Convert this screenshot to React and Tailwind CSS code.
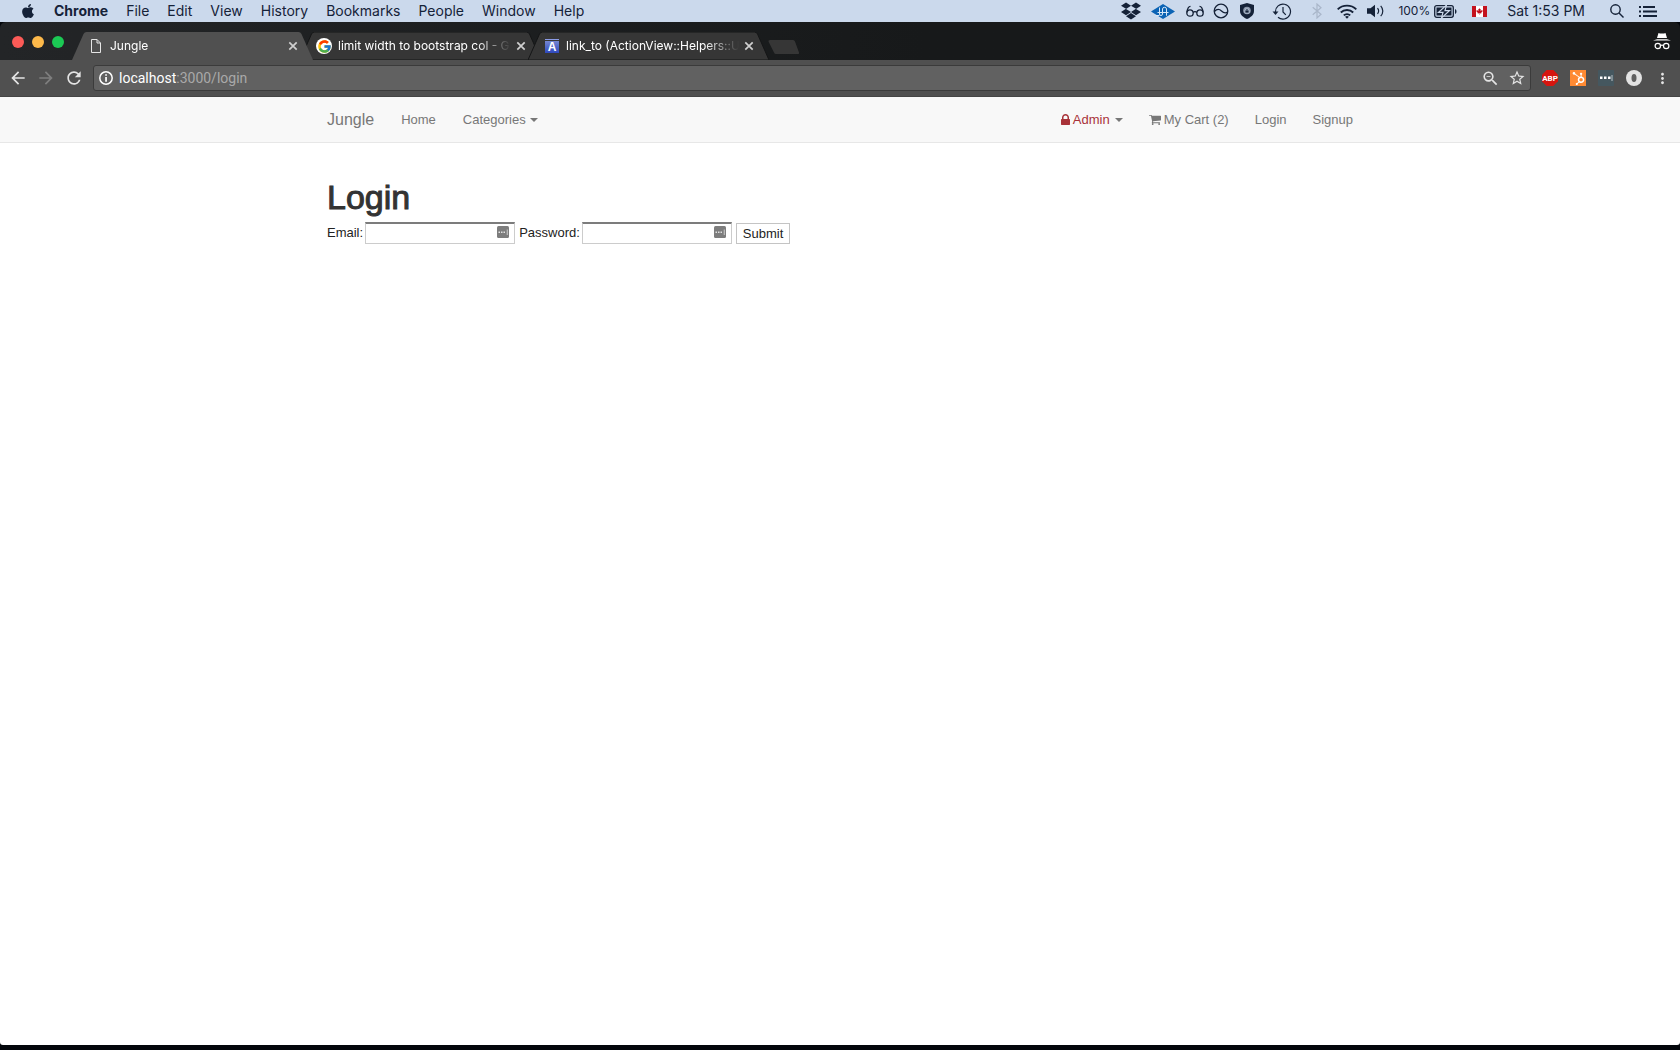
import React from "react";
import { FaApple, FaDropbox, FaHubspot, FaCanadianMapleLeaf } from "react-icons/fa";
import { FcGoogle } from "react-icons/fc";
import { MdArrowBack, MdArrowForward, MdRefresh, MdStarBorder, MdMoreVert, MdZoomOut } from "react-icons/md";

const menuItems = ["File", "Edit", "View", "History", "Bookmarks", "People", "Window", "Help"];

function GlassesIcon() {
  return (
    <svg width="18" height="12" viewBox="0 0 18 12" fill="none" stroke="currentColor" strokeWidth="1.3">
      <circle cx="4" cy="8" r="3.2" />
      <circle cx="14" cy="8" r="3.2" />
      <path d="M7.2 7.6c.8-1.4 2.8-1.4 3.6 0M1 7.4C1.300 4 2 1.300 4.500 1.300M17 7.400C16.700 4 16 1.300 13.500 1.300" />
    </svg>
  );
}

function DiamondIcon() {
  return (
    <svg width="24" height="15" viewBox="0 0 24 15">
      <path d="M12 0L24 7.500L12 15L0 7.500Z" fill="#0b63b4" />
      <path d="M8.500 3.500v6.500q0 1.500 1.500 1.500t1.500-1.500V5q0-1.700 2-1.700t2 1.700v6.700M4.500 11.500h4M6.500 8.500h11" fill="none" stroke="#d5e6f7" strokeWidth="1" />
    </svg>
  );
}

function CircleWaveIcon() {
  return (
    <svg width="16" height="16" viewBox="0 0 16 16" fill="none" stroke="currentColor" strokeWidth="1.300">
      <circle cx="8" cy="8" r="6.800" />
      <path d="M1.400 8.500C4 5.500 6.500 6 8.500 8s4 2.600 6.100 1" />
    </svg>
  );
}

function ShieldIcon() {
  return (
    <svg width="14" height="16" viewBox="0 0 14 16">
      <path d="M7 0l7 2v6c0 4-3.500 6.500-7 8-3.500-1.500-7-4-7-8V2z" fill="currentColor" />
      <circle cx="7" cy="7.500" r="3.800" fill="#8b97aa" />
      <path d="M5 7h4v3H5zM5.700 7V5.500h2.600V7" fill="#152238" stroke="#cfdcee" strokeWidth=".6" />
    </svg>
  );
}

function TimeMachineIcon() {
  return (
    <svg width="20" height="17" viewBox="0 0 20 17" fill="none" stroke="currentColor" strokeWidth="1.200">
      <path d="M3.500 9A7.500 7.500 0 1 1 6 14.200" />
      <path d="M11 4v5l2.800 2.800" />
      <path d="M.5 8.500h6L3.500 12z" fill="currentColor" stroke="none" />
    </svg>
  );
}

function BluetoothIcon() {
  return (
    <svg width="10" height="16" viewBox="0 0 10 16" fill="none" stroke="#a9b6c9" strokeWidth="1.200">
      <path d="M.7 4.300l8.300 7L5 15V1l4 3.700-8.300 7" />
    </svg>
  );
}

function WifiIcon() {
  return (
    <svg width="20" height="15" viewBox="0 0 20 15" fill="none" stroke="currentColor" strokeWidth="1.900">
      <path d="M.7 5.400c5-5 13.600-5 18.600 0M3.800 8.500c3.400-3.300 9-3.300 12.400 0M6.800 11.400c1.800-1.700 4.600-1.700 6.400 0" />
      <path d="M10 14.800l-1.900-2c1-1 2.800-1 3.800 0z" fill="currentColor" stroke="none" />
    </svg>
  );
}

function VolumeIcon() {
  return (
    <svg width="17" height="14" viewBox="0 0 17 14" fill="none" stroke="currentColor" strokeWidth="1.200">
      <path d="M0 4.300h3.500L8 .8v12.400L3.500 9.700H0z" fill="currentColor" stroke="none" />
      <path d="M10.500 4.200c1.300 1.600 1.300 4 0 5.600M13.700 1.800c2.800 3 2.800 7.400 0 10.400" />
    </svg>
  );
}

function BatteryIcon() {
  return (
    <svg width="23" height="13" viewBox="0 0 23 13">
      <rect x=".7" y=".7" width="18.600" height="11.600" rx="2" fill="none" stroke="currentColor" strokeWidth="1.300" />
      <rect x="2.500" y="2.500" width="15" height="8" fill="currentColor" />
      <path d="M12.500 0L4.500 7.300h4.500L7.500 13l8-7.300H11z" fill="currentColor" stroke="#ccd9ec" strokeWidth="1.200" />
      <path d="M21 4c2 .8 2 4.200 0 5z" fill="currentColor" />
    </svg>
  );
}

function FlagIcon() {
  return (
    <span className="flex h-[11px] w-[15px] items-center justify-center border-x-4 border-[#c4131f] bg-white text-[#c4131f]">
      <FaCanadianMapleLeaf size={7} className="shrink-0" />
    </span>
  );
}

function SearchIcon() {
  return (
    <svg width="14" height="14" viewBox="0 0 14 14" fill="none" stroke="currentColor" strokeWidth="1.400">
      <circle cx="5.500" cy="5.500" r="4.700" />
      <path d="M9 9l4.500 4.500" />
    </svg>
  );
}

function ListIcon() {
  return (
    <svg width="18" height="11" viewBox="0 0 18 11" fill="currentColor">
      <path d="M0 0h2v2H0zM4 0h12v2H4zM0 4.500h2v2H0zM4 4.500h14v2H4zM0 9h2v2H0zM4 9h14v2H4z" />
    </svg>
  );
}

function MenuBar() {
  return (
    <header className="flex h-[22px] items-center justify-between bg-[#cbd9ec] pr-[23px] pl-5 font-[Inter,sans-serif] text-sm text-[#152238]">
      <nav className="flex items-center gap-[18px]" aria-label="Application menu">
        <FaApple size={16} />
        <span className="font-bold">Chrome</span>
        {menuItems.map((m) => (
          <span key={m}>{m}</span>
        ))}
      </nav>
      <div className="flex items-center">
        <FaDropbox size={20} />
        <span className="ml-2.5"><DiamondIcon /></span>
        <span className="ml-[11px]"><GlassesIcon /></span>
        <span className="ml-[9px]"><CircleWaveIcon /></span>
        <span className="ml-[11px]"><ShieldIcon /></span>
        <span className="ml-[18px]"><TimeMachineIcon /></span>
        <span className="ml-5"><BluetoothIcon /></span>
        <span className="ml-[15px]"><WifiIcon /></span>
        <span className="ml-2.5"><VolumeIcon /></span>
        <span className="ml-3.5 text-xs">100%</span>
        <span className="ml-1"><BatteryIcon /></span>
        <span className="ml-[15px]"><FlagIcon /></span>
        <span className="ml-5">Sat 1:53 PM</span>
        <span className="ml-[25px]"><SearchIcon /></span>
        <span className="ml-[15px]"><ListIcon /></span>
      </div>
    </header>
  );
}

function PageIcon() {
  return (
    <svg width="10" height="14" viewBox="0 0 10 14" fill="none" stroke="#e6e6e6" strokeWidth="1">
      <path d="M.5.5H6L9.500 4v9.500h-9zM6 .5V4h3.500" />
    </svg>
  );
}

function GoogleIcon() {
  return (
    <span className="flex size-4 items-center justify-center rounded-full bg-white">
      <FcGoogle size={15} />
    </span>
  );
}

function LetterIcon() {
  return (
    <span className="flex flex-col gap-px">
      <span className="h-px w-3.5 bg-[#8b9be6]" />
      <span className="flex h-3 w-3.5 items-center justify-center bg-linear-to-b from-[#7586d2] to-[#2f48bd] font-[Liberation_Sans,sans-serif] text-xs font-bold text-white">
        A
      </span>
    </span>
  );
}

function Tab({ icon, title, active }) {
  return (
    <div className={active ? "relative z-10 -mr-[13px] h-7 w-[241px]" : "relative -mr-[13px] h-7 w-[241px]"}>
      <svg className="absolute inset-0" width="241" height="28" viewBox="0 0 241 28">
        <path
          d="M0 28L11.500 2Q12.500 0 14.500 0H226.500Q228.500 0 229.500 2L241 28Z"
          fill={active ? "#505050" : "#363636"}
          stroke="#151617"
          strokeWidth={active ? "0" : "1"}
        />
      </svg>
      <div className="relative flex h-full items-center pl-4">
        <span className="flex w-[22px] shrink-0 items-center">
          <span className="flex w-4 justify-center">{icon}</span>
        </span>
        <span className="w-[173px] font-[Inter,sans-serif] text-xs whitespace-nowrap text-white mask-r-from-80% mask-r-to-100%">
          {title}
        </span>
        <button type="button" aria-label="Close tab" className="ml-[5px] text-[#d0d0d0]">
          <svg width="10" height="10" viewBox="0 0 10 10" stroke="currentColor" strokeWidth="1.700">
            <path d="M1.300 1.300l7.400 7.400M8.700 1.300L1.300 8.700" />
          </svg>
        </button>
      </div>
    </div>
  );
}

function IncognitoIcon() {
  return (
    <svg width="18" height="17" viewBox="0 0 18 17">
      <path d="M5.500 0l1.500.5h4L12.500 0 14 5H4zM0 7.500l4-1.200h10l4 1.200z" fill="#fff" />
      <g fill="none" stroke="#fff" strokeWidth="1.200">
        <circle cx="4.800" cy="13" r="2.700" />
        <circle cx="13.200" cy="13" r="2.700" />
        <path d="M7.500 12.500q1.500-.8 3 0" />
      </g>
    </svg>
  );
}

function TabStrip() {
  return (
    <div className="flex h-[38px] items-end justify-between rounded-t-md bg-linear-to-r from-[#232527] via-[#17191a] via-55% to-[#17191a] pl-3">
      <div className="flex items-end">
        <div className="mr-3 mb-3 flex gap-2">
          <button type="button" aria-label="Close window" className="size-3 rounded-full bg-[#fc5b57]" />
          <button type="button" aria-label="Minimise window" className="size-3 rounded-full bg-[#fdb94a]" />
          <button type="button" aria-label="Zoom window" className="mr-[-4px] size-3 rounded-full bg-[#1bc954]" />
        </div>
        <Tab active icon={<PageIcon />} title="Jungle" />
        <Tab icon={<GoogleIcon />} title="limit width to bootstrap col - G" />
        <Tab icon={<LetterIcon />} title="link_to (ActionView::Helpers::U" />
        <button type="button" aria-label="New tab" className="mb-1.5 ml-3">
          <svg width="32" height="14" viewBox="0 0 32 14">
            <path d="M2 0H25Q26.500 0 27 1.500L31 12.500Q31.500 14 30 14H8Q6.500 14 6 12.500L.5 1.500Q0 0 2 0Z" fill="#363636" />
          </svg>
        </button>
      </div>
      <div className="self-center pr-[9px]">
        <IncognitoIcon />
      </div>
    </div>
  );
}

function InfoIcon() {
  return (
    <svg width="14" height="14" viewBox="0 0 14 14" className="mr-1.5 ml-px">
      <circle cx="7" cy="7" r="6.200" fill="none" stroke="#fff" strokeWidth="1.500" />
      <path d="M6.200 3.200h1.700v1.600H6.200zM6.200 6h1.700v4.800H6.200z" fill="#fff" />
    </svg>
  );
}

function DotsBox() {
  return (
    <svg width="16" height="16" viewBox="0 0 16 16">
      <rect width="16" height="16" rx="1" fill="#45575f" />
      <path d="M2 6.500h2.500V9H2zM6 6.500h2.500V9H6zM10 6.500h2.500V9H10z" fill="#fff" />
      <path d="M13.500 5h1v6h-1z" fill="#b9c2c6" />
    </svg>
  );
}

function Toolbar() {
  return (
    <div className="flex h-[37px] items-center border-b border-[#454545] bg-[#505050] pr-[9px] pl-2 text-[#e4e4e4]">
      <button type="button" aria-label="Back" className="mr-2"><MdArrowBack size={20} /></button>
      <button type="button" aria-label="Forward" className="mr-2 text-[#7e7e7e]"><MdArrowForward size={20} /></button>
      <button type="button" aria-label="Reload" className="mr-[9px]"><MdRefresh size={20} /></button>
      <div className="flex h-[26px] flex-1 items-center rounded-[3px] border border-[#3b3b3b] bg-[#616161] px-1">
        <InfoIcon />
        <div className="flex-1 font-[Roboto,sans-serif] text-sm text-white">
          localhost<span className="text-[#a9a9a9]">:3000/login</span>
        </div>
        <button type="button" aria-label="Zoom" className="mr-2"><MdZoomOut size={19} /></button>
        <button type="button" aria-label="Bookmark this page"><MdStarBorder size={18} /></button>
      </div>
      <div className="ml-[11px] flex items-center gap-3">
        <svg width="16" height="16" viewBox="0 0 16 16">
          <path d="M4.700 0h6.600L16 4.700v6.600L11.300 16H4.700L0 11.300V4.700z" fill="#d6150f" />
          <text x="8" y="11" textAnchor="middle" fontSize="8" fontWeight="700" fontFamily="Roboto, sans-serif" fill="#fff">ABP</text>
        </svg>
        <span className="flex size-4 items-center justify-center bg-[#ff8a33] text-white"><FaHubspot size={13} /></span>
        <DotsBox />
        <svg width="16" height="16" viewBox="0 0 16 16">
          <circle cx="8" cy="8" r="8" fill="#e3e3e3" />
          <ellipse cx="8" cy="8" rx="2.500" ry="4" fill="#606060" />
        </svg>
        <button type="button" aria-label="Menu"><MdMoreVert size={17} /></button>
      </div>
    </div>
  );
}

function LockIcon() {
  return (
    <svg width="9" height="14" viewBox="0 0 1152 1792" fill="currentColor" className="mr-[3px]">
      <path d="M320 768h512v-192q0-106-75-181t-181-75-181 75-75 181v192zm832 96v576q0 40-28 68t-68 28h-960q-40 0-68-28t-28-68v-576q0-40 28-68t68-28h32v-192q0-184 132-316t316-132 316 132 132 316v192h32q40 0 68 28t28 68z" />
    </svg>
  );
}

function CartIcon() {
  return (
    <svg width="12" height="13" viewBox="0 0 1664 1792" fill="currentColor" className="mr-[3px]">
      <path d="M640 1536q0 52-38 90t-90 38-90-38-38-90 38-90 90-38 90 38 38 90zm896 0q0 52-38 90t-90 38-90-38-38-90 38-90 90-38 90 38 38 90zm128-1088v512q0 24-16.500 42.500t-40.500 21.500l-1044 122q13 60 13 70 0 16-24 64h920q26 0 45 19t19 45-19 45-45 19h-1024q-26 0-45-19t-19-45q0-11 8-31.500t16-36 21.500-40 15.500-29.500l-177-823h-204q-26 0-45-19t-19-45 19-45 45-19h256q16 0 28.500 6.500t19.500 15.500 13 24.500 8 26 5.500 29.500 4.500 26h1201q26 0 45 19t19 45z" />
    </svg>
  );
}

function Caret() {
  return <span className="border-x-4 border-t-4 border-x-transparent border-t-[#777]" />;
}

function SiteNav() {
  return (
    <nav className="border-b border-[#e7e7e7] bg-[#f8f8f8]">
      <div className="mx-auto flex h-[45px] max-w-[1054px] items-center justify-between px-3.5 text-[13px] text-[#777]">
        <div className="flex items-center gap-[27px]">
          <a href="#" className="text-base">Jungle</a>
          <a href="#">Home</a>
          <a href="#" className="flex items-center gap-1">Categories <Caret /></a>
        </div>
        <div className="flex items-center gap-[26px]">
          <a href="#" className="flex items-center text-[#a83238]">
            <LockIcon />
            <span className="mr-[5px]">Admin</span>
            <Caret />
          </a>
          <a href="#" className="flex items-center">
            <CartIcon />
            My Cart (2)
          </a>
          <a href="#">Login</a>
          <a href="#">Signup</a>
        </div>
      </div>
    </nav>
  );
}

function Field({ id, label, type }) {
  return (
    <div className="flex items-center gap-0.5">
      <label htmlFor={id}>{label}</label>
      <div className="relative">
        <input id={id} type={type} className="block h-[22px] w-[150px] border border-t-2 border-[#ccc] border-t-[#7c7c7c] bg-white pr-6 pl-1 outline-none" />
        <svg className="absolute top-1 right-1.5" width="12" height="12" viewBox="0 0 12 12">
          <rect width="12" height="12" rx="1.500" fill="#7d7d7d" />
          <path d="M1.500 5.500H3V7H1.500zM4 5.500h1.500V7H4zM6.500 5.500H8V7H6.500zM9.800 3.500h.8v5.500h-.8z" fill="#e2e2e2" />
        </svg>
      </div>
    </div>
  );
}

export default function App() {
  return (
    <div className="flex min-h-screen flex-col bg-[#03060b]">
      <MenuBar />
      <TabStrip />
      <Toolbar />
      <div className="mb-[5px] flex-1 overflow-hidden rounded-b-[3px] bg-white font-[Liberation_Sans,Arial,sans-serif]">
        <SiteNav />
        <main className="mx-auto max-w-[1054px] px-3.5 pt-9 text-[13px] text-[#222]">
          <h1 className="text-[34px] leading-9 font-normal text-[#333] [-webkit-text-stroke:1px_#333]">Login</h1>
          <form className="mt-[7px] flex items-end gap-1" onSubmit={(e) => e.preventDefault()}>
            <Field id="email" label="Email:" type="email" />
            <Field id="password" label="Password:" type="password" />
            <button type="submit" className="h-[21px] border border-[#c4c4c4] bg-white px-1.5 leading-none">Submit</button>
          </form>
        </main>
      </div>
    </div>
  );
}
